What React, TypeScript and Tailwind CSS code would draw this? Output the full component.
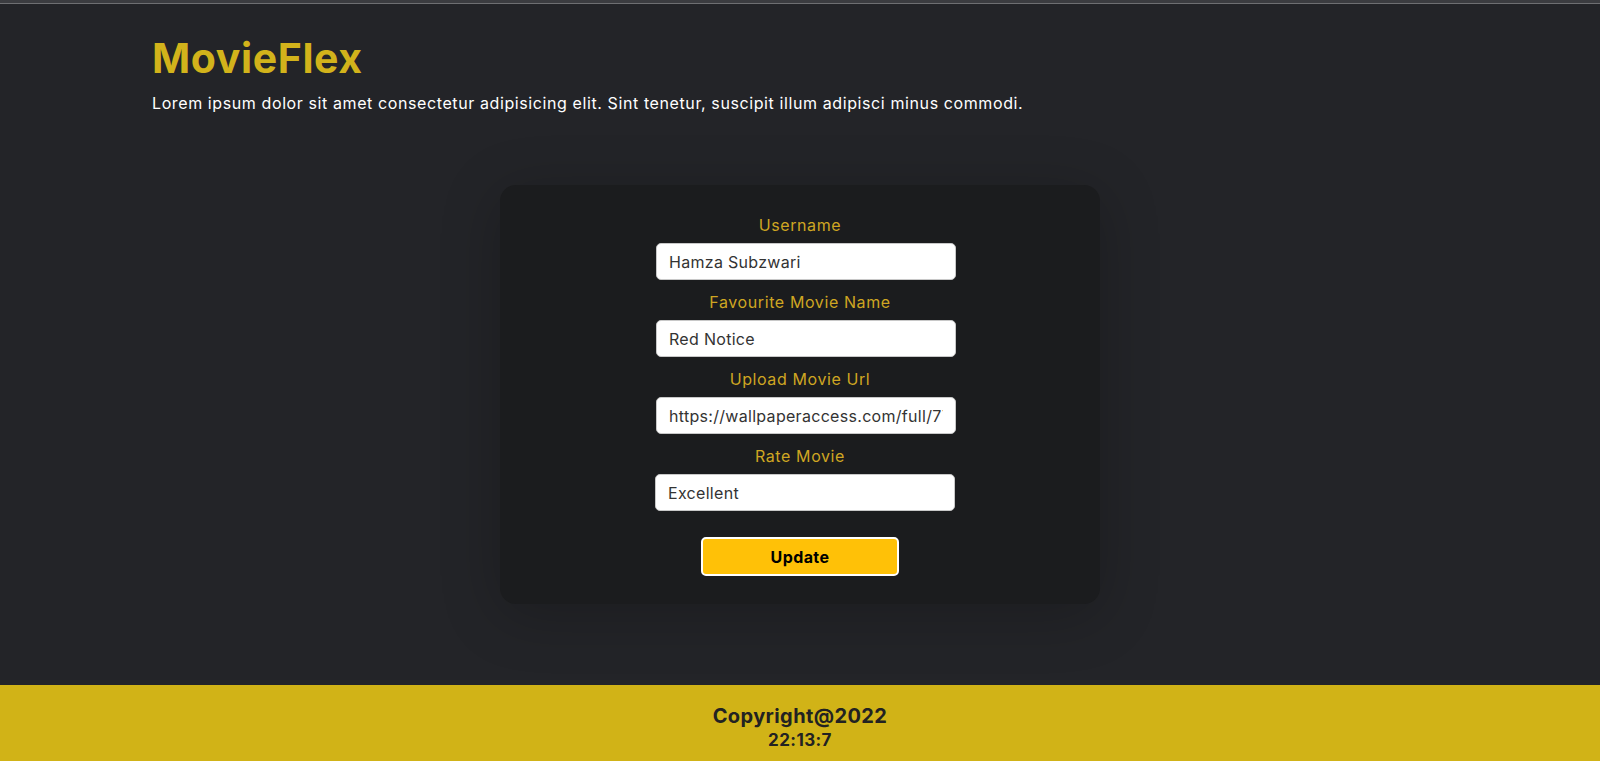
import React from "react";

const font = { fontFamily: "Inter, 'Open Sans', sans-serif" };

function Field({ label, value, offset }: { label: string; value: string; offset: string }) {
  return (
    <div className="flex flex-col items-center">
      <label className="text-[16px] leading-[24px] tracking-[0.6px] text-[#cfa622]">{label}</label>
      <input
        readOnly
        value={value}
        className={`mt-[6px] h-[37px] w-[300px] rounded-[5px] border border-[#c8c8c8] bg-white px-[12px] text-[16px] tracking-[0.3px] text-[#333] outline-none ${offset}`}
      />
    </div>
  );
}

export default function App() {
  return (
    <div className="flex min-h-[761px] flex-col bg-[#232428]" style={font}>
      {/* browser edge */}
      <div className="h-[3px] bg-[#3b3c40]" />
      <div className="h-px bg-[#6e6f72]" />

      <div className="flex-1">
        {/* header */}
        <div className="mx-auto w-[1320px] px-3 pt-[26px]">
          <h1 className="text-[41px] font-bold leading-[56px] tracking-[0.6px] text-[#d2b31b]">MovieFlex</h1>
          <p className="mt-[5px] text-[16px] leading-[24px] tracking-[0.6px] text-white">
            Lorem ipsum dolor sit amet consectetur adipisicing elit. Sint tenetur, suscipit illum adipisci minus commodi.
          </p>
        </div>

        {/* form card */}
        <div className="mx-auto mt-[70px] w-[600px] rounded-[16px] bg-[#1b1c1e] pt-[28px] pb-[28px] shadow-[0_10px_60px_rgba(0,0,0,0.22)]">
          <div className="flex flex-col gap-[10px]">
            <Field label="Username" value="Hamza Subzwari" offset="ml-[12px]" />
            <Field label="Favourite Movie Name" value="Red Notice" offset="ml-[12px]" />
            <Field label="Upload Movie Url" value="https://wallpaperaccess.com/full/7719381.jpg" offset="ml-[12px]" />
            <Field label="Rate Movie" value="Excellent" offset="ml-[10px]" />
          </div>
          <div className="mt-[26px] flex justify-center">
            <button className="h-[39px] w-[198px] rounded-[5px] border-2 border-white bg-[#ffc107] text-[16px] font-bold tracking-[0.4px] text-black">
              Update
            </button>
          </div>
        </div>
      </div>

      {/* footer */}
      <footer className="flex h-[76px] flex-col items-center bg-[#d1b317] pt-[18px] text-[#222]">
        <div className="text-[20px] font-bold leading-[26px] tracking-[0.4px]">Copyright@2022</div>
        <div className="text-[17px] font-bold leading-[22px] tracking-[0.4px]">22:13:7</div>
      </footer>
    </div>
  );
}
